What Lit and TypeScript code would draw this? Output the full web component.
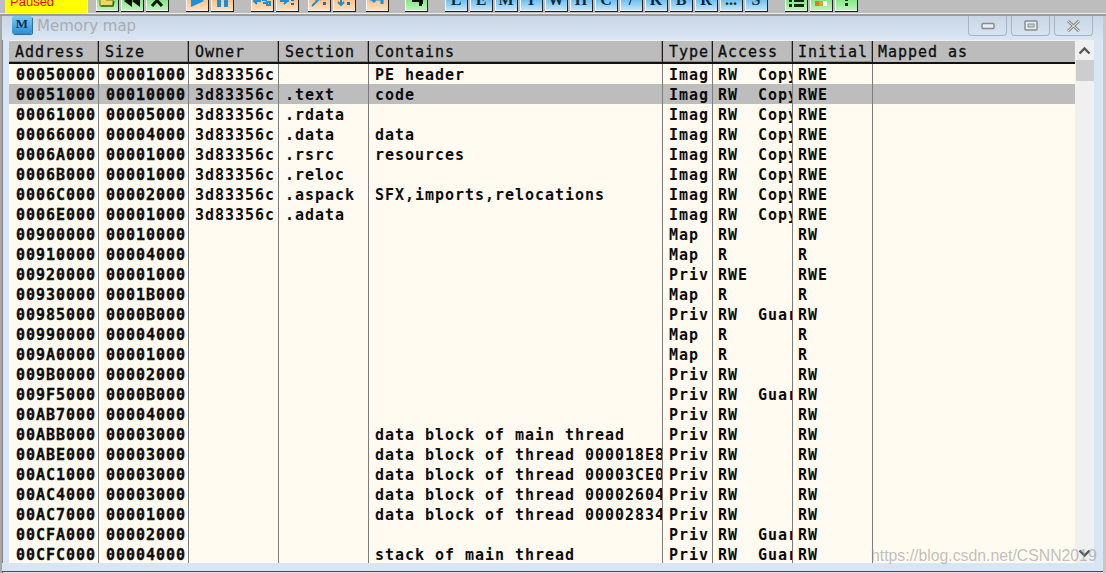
import { LitElement, html, css, svg } from "lit";
import { customElement } from "lit/decorators.js";

type Row = [string, string, string, string, string, string, string, string];
const I = "Imag", P = "Priv", M = "Map";
const T = "3d83356c";
const C = "RW  Copy", G = "RW  Guard";
const rows: Row[] = [
  ["00050000", "00001000", T, "", "PE header", I, C, "RWE"],
  ["00051000", "00010000", T, ".text", "code", I, C, "RWE"],
  ["00061000", "00005000", T, ".rdata", "", I, C, "RWE"],
  ["00066000", "00004000", T, ".data", "data", I, C, "RWE"],
  ["0006A000", "00001000", T, ".rsrc", "resources", I, C, "RWE"],
  ["0006B000", "00001000", T, ".reloc", "", I, C, "RWE"],
  ["0006C000", "00002000", T, ".aspack", "SFX,imports,relocations", I, C, "RWE"],
  ["0006E000", "00001000", T, ".adata", "", I, C, "RWE"],
  ["00900000", "00010000", "", "", "", M, "RW", "RW"],
  ["00910000", "00004000", "", "", "", M, "R", "R"],
  ["00920000", "00001000", "", "", "", P, "RWE", "RWE"],
  ["00930000", "0001B000", "", "", "", M, "R", "R"],
  ["00985000", "0000B000", "", "", "", P, G, "RW"],
  ["00990000", "00004000", "", "", "", M, "R", "R"],
  ["009A0000", "00001000", "", "", "", M, "R", "R"],
  ["009B0000", "00002000", "", "", "", P, "RW", "RW"],
  ["009F5000", "0000B000", "", "", "", P, G, "RW"],
  ["00AB7000", "00004000", "", "", "", P, "RW", "RW"],
  ["00ABB000", "00003000", "", "", "data block of main thread", P, "RW", "RW"],
  ["00ABE000", "00003000", "", "", "data block of thread 000018E8", P, "RW", "RW"],
  ["00AC1000", "00003000", "", "", "data block of thread 00003CE0", P, "RW", "RW"],
  ["00AC4000", "00003000", "", "", "data block of thread 00002604", P, "RW", "RW"],
  ["00AC7000", "00001000", "", "", "data block of thread 00002834", P, "RW", "RW"],
  ["00CFA000", "00002000", "", "", "", P, G, "RW"],
  ["00CFC000", "00004000", "", "", "stack of main thread", P, G, "RW"],
];
const heads = ["Address", "Size", "Owner", "Section", "Contains", "Type", "Access", "Initial", "Mapped as"];

const icon = (body: unknown) =>
  html`<svg class="ico" viewBox="0 0 22 24" width="22" height="24">${body}</svg>`;

const icons: Record<string, unknown> = {
  open: svg`<path d="M4 11h5l1 1h7v6H4z" fill="#f0d860" stroke="#6a7a20"/><path d="M5 18h12l1-5" fill="none" stroke="#3a6a20" stroke-width="1.5"/>`,
  rew: svg`<path d="M11 7v12L3 13zM19 7v12l-8-6z" fill="#111"/>`,
  x: svg`<path d="M6 7l10 11M16 7L6 18" stroke="#111" stroke-width="3"/>`,
  play: svg`<path d="M5 4l13 9-13 6z" fill="#1a8fdc"/>`,
  pause: svg`<path d="M6 4h4v15H6zM13 4h4v15h-4z" fill="#1a8fdc"/>`,
  s1: svg`<path d="M3 13h7M6 10l-3 3 3 3M12 9h3v3h-3zM16 14h3v3h-3zM12 15h3" stroke="#1a8fdc" stroke-width="2" fill="none"/>`,
  s2: svg`<path d="M4 13h9M8 10l3 3-3 3" stroke="#1a8fdc" stroke-width="2" fill="none"/><path d="M15 9h3v4h-3zM15 15h3v2h-3z" fill="#1a6fb0"/>`,
  s3: svg`<path d="M4 18l6-6v-3M7 12l3-3 3 3" stroke="#1a8fdc" stroke-width="2" fill="none"/><path d="M15 9h3v3h-3zM15 14h3v3h-3z" fill="#1a6fb0"/>`,
  s4: svg`<path d="M8 9v8M5 14l3 3 3-3" stroke="#1a8fdc" stroke-width="2" fill="none"/><path d="M14 9h3v3h-3zM14 14h3v3h-3z" fill="#1a6fb0"/>`,
  s5: svg`<path d="M4 11h12v5M9 8l-3 3 3 3" stroke="#1a8fdc" stroke-width="3" fill="none"/>`,
  g1: svg`<path d="M4 6h10v6h4v4h-4v-2H7v-2H4z" fill="#0c0c0c"/><path d="M14 16h3v2h-3z" fill="#0c0c0c"/>`,
  list: svg`<path d="M4 6h3v3H4zM9 6h10v3H9zM4 11h3v3H4zM9 11h10v3H9zM4 16h3v3H4zM9 16h10v3H9z" fill="#0c2c0c"/>`,
  col: svg`<path d="M5 6h4v5H5z" fill="#888"/><path d="M9 6h4v5H9z" fill="#2a80d0"/><path d="M13 6h4v5h-4z" fill="#3aa040"/><path d="M5 13h4v5H5z" fill="#e07820"/><path d="M9 13h4v5H9z" fill="#e8a020"/><path d="M13 13h4v5h-4z" fill="#fff"/>`,
  q: svg`<path d="M10 4h3v9h-3zM10 15h3v3h-3z" fill="#0c2c0c"/>`,
};

const letters = ["L", "E", "M", "T", "W", "H", "C", "/", "K", "B", "R", "...", "S"];

@customElement("app-root")
export class AppRoot extends LitElement {
  static styles = css`
    :host { display: block; width: 1106px; height: 573px; overflow: hidden; background: #c8c8c8; position: relative; }
    .toolbar { display: flex; gap: 17px; height: 13px; overflow: hidden; align-items: flex-end; background: #bdbdbd; padding-left: 5px; }
    .status { width: 83px; height: 13px; flex: none; background: #ffff00; color: #f00000; margin-right: -9px; font: 13px/1 "Liberation Sans", sans-serif; overflow: hidden; padding-left: 5px; box-sizing: border-box; box-shadow: inset -1px 0 #eee; }
    .status span { display: block; margin-top: -5px; }
    .group { display: flex; gap: 2px; flex: none; align-items: flex-end; }
    .g4 { margin-left: -8px; }
    .g5 { margin-left: -7px; }
    .g6 { margin-left: -1px; }
    .btn { width: 23px; height: 24px; flex: none; box-sizing: border-box; border-right: 1px solid #222; border-bottom: 1px solid #222; box-shadow: inset 1px 0 #f4f4f4, inset 0 -1px #f0f0f0; display: flex; align-items: center; justify-content: center; margin-bottom: 1px; }
    .orange { background: linear-gradient(#ffa860, #ffc48c 55%, #ffe2c4); }
    .green { background: linear-gradient(#50d850, #88e888 55%, #c4f4c4); }
    .blue { background: linear-gradient(#3aa4ea, #74c2f0 55%, #cce9fa); font: bold 16px/1 "Liberation Serif", serif; color: #10283c; }
    .ico { display: block; }
    .sep { height: 1px; background: #ececec; }
    .sep2 { height: 2px; background: #9c9c9c; }
    .win { height: 557px; box-sizing: border-box; margin-right: 3px; border-left: 2px solid #a8a8a8; box-shadow: inset 1px 0 #808080; background: #d8e5f3; display: flex; flex-direction: column; }
    .title { height: 24px; flex: none; display: flex; background: linear-gradient(#c8d6e5, #dae6f3); padding-left: 10px; }
    .mi { width: 20px; height: 18px; box-sizing: border-box; background: linear-gradient(#7ccaf4, #2a8ed8); border-radius: 2px; color: #10304c; font: bold 13px/15px "Liberation Serif", serif; text-align: center; box-shadow: 1px 1px 0 #3a6a90; }
    .tt { margin-left: 5px; margin-top: 1px; color: #a9adb2; font: 15px/18px "DejaVu Sans", sans-serif; }
    .wb { margin-left: auto; display: flex; gap: 4px; margin-right: 10px; }
    .wbtn { width: 39px; height: 20px; box-sizing: border-box; border: 1px solid #a6b4c4; border-top: none; border-radius: 0 0 4px 4px; background: linear-gradient(#c8d6e5, #d8e3f0); display: flex; align-items: center; justify-content: center; }
    .body { display: flex; margin: 0 0 0 7px; height: 523px; overflow: hidden; }
    .table { width: 1066px; flex: none; background: #fffbf0; overflow: hidden; }
    .row, .head { display: grid; grid-template-columns: 90px 90px 90px 90px 294px 50px 80px 80px 1fr; grid-auto-rows: 20px; font: bold 15px/22px "DejaVu Sans Mono", monospace; letter-spacing: 0.97px; white-space: pre; color: #0c0c0c; }
    .head { height: 24px; grid-auto-rows: 21px; box-sizing: border-box; background: #bcbcbc; border-top: 1px solid #f0f0f0; border-bottom: 2px solid #111; font-weight: normal; -webkit-text-stroke: 0.3px #111; line-height: 23px; }
    .row { height: 20px; }
    .row.sel { background: #bdbdbd; }
    .c { overflow: hidden; box-sizing: border-box; padding-left: 6px; border-right: 1px solid #7c7c7c; }
    .c.last { border-right: none; }
    .c.n { padding-left: 7px; -webkit-text-stroke: 0.35px #0c0c0c; }
    .c.t { padding-left: 5px; }
    .h { overflow: hidden; box-sizing: border-box; padding-left: 6px; border-right: 1px solid #1c1c1c; box-shadow: inset -1px -1px #8c8c8c; }
    .h.t { padding-left: 5px; }
    .h.last { border-right: none; box-shadow: none; }
    .scroll { width: 19px; flex: none; background: #f0f0f0; position: relative; display: flex; flex-direction: column; }
    .arr { height: 20px; display: flex; align-items: center; justify-content: center; flex: none; }
    .thumb { height: 21px; background: #cdcdcd; flex: none; margin-left: 1px; }
    .track { flex: 1; }
    .foot { flex: none; height: 8px; background: #d8e5f3; border-bottom: 1px solid #4a4a4a; }
    .wm { position: absolute; left: 871px; top: 545px; color: rgba(150,150,150,.6); font: 15.8px/22px "Liberation Sans", sans-serif; white-space: nowrap; }
  `;

  private btn(kind: string, name: string) {
    return html`<div class="btn ${kind}">${icon(icons[name])}</div>`;
  }

  render() {
    return html`
      <div class="toolbar">
        <div class="status"><span>Paused</span></div>
        <div class="group">${["open", "rew", "x"].map((n) => this.btn("green", n))}</div>
        <div class="group">${["play", "pause"].map((n) => this.btn("orange", n))}</div>
        <div class="group">${["s1", "s2"].map((n) => this.btn("orange", n))}</div>
        <div class="group g4">${["s3", "s4"].map((n) => this.btn("orange", n))}</div>
        <div class="group g5">${this.btn("orange", "s5")}</div>
        <div class="group g6">${this.btn("green", "g1")}</div>
        <div class="group">${letters.map((l) => html`<div class="btn blue">${l}</div>`)}</div>
        <div class="group">${["list", "col", "q"].map((n) => this.btn("green", n))}</div>
      </div>
      <div class="sep"></div>
      <div class="sep2"></div>
      <div class="win">
        <div class="title">
          <div class="mi">M</div>
          <div class="tt">Memory map</div>
          <div class="wb">
            <div class="wbtn"><svg width="14" height="8" viewBox="0 0 14 8"><rect x="1" y="1.5" width="12" height="5" rx="1" fill="#e8eef5" stroke="#8a8a8a" stroke-width="1.5"/></svg></div>
            <div class="wbtn"><svg width="14" height="12" viewBox="0 0 14 12"><rect x="1" y="1" width="12" height="9" rx="1" fill="#e8eef5" stroke="#8a8a8a" stroke-width="1.5"/><rect x="4" y="4" width="6" height="3" fill="#c8d6e5" stroke="#8a8a8a"/></svg></div>
            <div class="wbtn"><svg width="15" height="12" viewBox="0 0 15 12"><path d="M2 1l11 10M13 1L2 11" stroke="#8a8a8a" stroke-width="3"/><path d="M2 1l11 10M13 1L2 11" stroke="#eef2f7" stroke-width="1"/></svg></div>
          </div>
        </div>
        <div class="body">
          <div class="table">
            <div class="head">
              ${heads.map((h, i) => html`<div class="h ${i >= 6 ? "t" : ""} ${i === 8 ? "last" : ""}">${h}</div>`)}
            </div>
            ${rows.map(
              (r, i) => html`<div class="row ${i === 1 ? "sel" : ""}">
                ${r.map((v, j) => html`<div class="c ${j < 2 ? "n" : ""} ${j >= 6 ? "t" : ""}">${v}</div>`)}
                <div class="c last"></div>
              </div>`
            )}
          </div>
          <div class="scroll">
            <div class="arr"><svg width="13" height="9" viewBox="0 0 13 9"><path d="M1.5 7.5l5-5 5 5" fill="none" stroke="#555" stroke-width="2.4"/></svg></div>
            <div class="thumb"></div>
            <div class="track"></div>
            <div class="arr"><svg width="13" height="9" viewBox="0 0 13 9"><path d="M1.5 1.5l5 5 5-5" fill="none" stroke="#555" stroke-width="2.4"/></svg></div>
          </div>
        </div>
        <div class="foot"></div>
      </div>
      <div class="wm">https://blog.csdn.net/CSNN2019</div>
    `;
  }
}
